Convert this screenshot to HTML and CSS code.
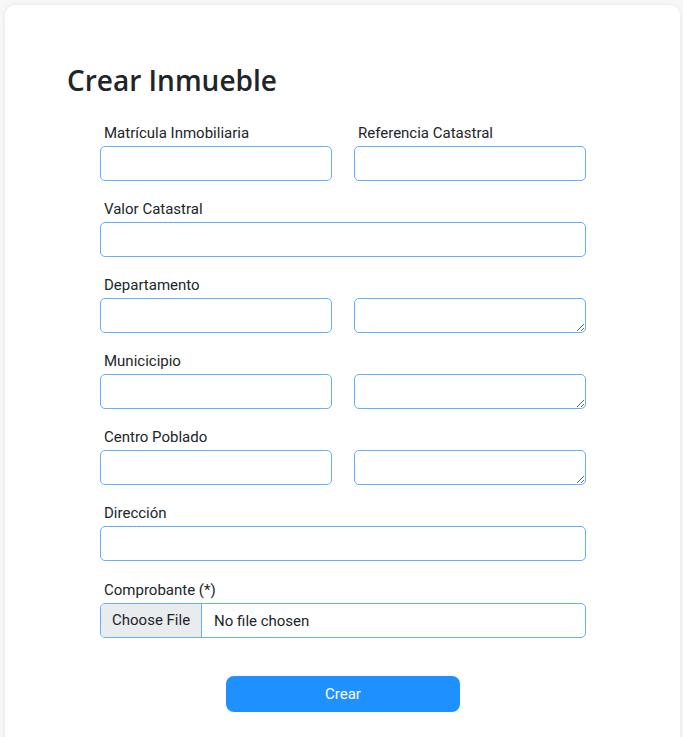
FILE: index.html
```html
<!DOCTYPE html>
<html lang="es">
<head>
  <meta charset="UTF-8">
  <title>Crear Inmueble</title>
  <meta name="viewport" content="width=device-width, initial-scale=1.0">
  <link rel="stylesheet" href="styles.css">
</head>
<body>

  <div class="form-card">
    <h1 class="form-title">Crear Inmueble</h1>

    <form class="property-form">
      <div class="form-row two-cols">
        <div class="field">
          <label for="matricula">Matrícula Inmobiliaria</label>
          <input type="text" id="matricula">
        </div>
        <div class="field">
          <label for="referencia">Referencia Catastral</label>
          <input type="text" id="referencia">
        </div>
      </div>

      <div class="form-row">
        <div class="field">
          <label for="valor">Valor Catastral</label>
          <input type="text" id="valor">
        </div>
      </div>

      <div class="form-row two-cols">
        <div class="field">
          <label for="departamento">Departamento</label>
          <input type="text" id="departamento">
        </div>
        <div class="field no-label">
          <textarea id="departamentoDesc"></textarea>
        </div>
      </div>

      <div class="form-row two-cols">
        <div class="field">
          <label for="municipio">Municicipio</label>
          <input type="text" id="municipio">
        </div>
        <div class="field no-label">
          <textarea id="municipioDesc"></textarea>
        </div>
      </div>

      <div class="form-row two-cols">
        <div class="field">
          <label for="centro">Centro Poblado</label>
          <input type="text" id="centro">
        </div>
        <div class="field no-label">
          <textarea id="centroDesc"></textarea>
        </div>
      </div>

      <div class="form-row">
        <div class="field">
          <label for="direccion">Dirección</label>
          <input type="text" id="direccion">
        </div>
      </div>

      <div class="form-row">
        <div class="field">
          <label for="comprobante">Comprobante (*)</label>
          <input type="file" id="comprobante">
        </div>
      </div>

      <div class="form-actions">
        <button type="submit" class="btn-submit">Crear</button>
      </div>
    </form>
  </div>

</body>
</html>
```

FILE: styles.css
```css
body {
  font-family: Roboto, 'Liberation Sans', sans-serif;
  background: #f7f7f7;
  margin: 0;
  padding: 5px 3px 5px 5px;
  color: #212529;
}

.form-card {
  background: #fff;
  border-radius: 10px;
  box-shadow: 0 0 4px rgba(0,0,0,0.08);
  padding: 58px 62px 40px 62px;
  min-height: 700px;
}

.form-title {
  font-family: 'Open Sans', 'Noto Sans', sans-serif;
  font-size: 28px;
  font-weight: 600;
  line-height: 34px;
  margin: 0 0 26px;
  color: #212529;
}

.property-form {
  width: 486px;
  margin: 0 0 0 33px;
}

.form-row {
  margin-bottom: 18.1px;
}

.two-cols {
  display: grid;
  grid-template-columns: 1fr 1fr;
  gap: 22px;
}

.field {
  display: flex;
  flex-direction: column;
}

.field.no-label {
  justify-content: flex-end;
}

.field label {
  font-size: 15px;
  line-height: 20px;
  padding-left: 4px;
  margin-bottom: 3px;
}

.field input,
.field textarea {
  box-sizing: border-box;
  width: 100%;
  height: 35px;
  border: 1px solid #62b0ff;
  border-radius: 5px;
  padding: 6px 10px;
  font-family: inherit;
  font-size: 16px;
  color: #212529;
  background: #fff;
  margin: 0;
}

.field textarea {
  display: block;
  resize: vertical;
}

.field input[type="file"] {
  padding: 0;
  overflow: hidden;
  line-height: 33px;
  font-size: 15px;
}

.field input[type="file"]::file-selector-button {
  height: 33px;
  padding: 0 11px;
  margin: 0 12px 0 0;
  border: 0;
  border-right: 1px solid #62b0ff;
  background: #e9ecef;
  font-family: inherit;
  font-size: 15px;
  color: #212529;
}

.form-actions {
  display: flex;
  justify-content: center;
  padding-top: 20px;
}

.btn-submit {
  width: 234px;
  height: 36px;
  border: 0;
  border-radius: 8px;
  background: #1e90ff;
  color: #fff;
  font-family: inherit;
  font-size: 15px;
  cursor: pointer;
}
```
